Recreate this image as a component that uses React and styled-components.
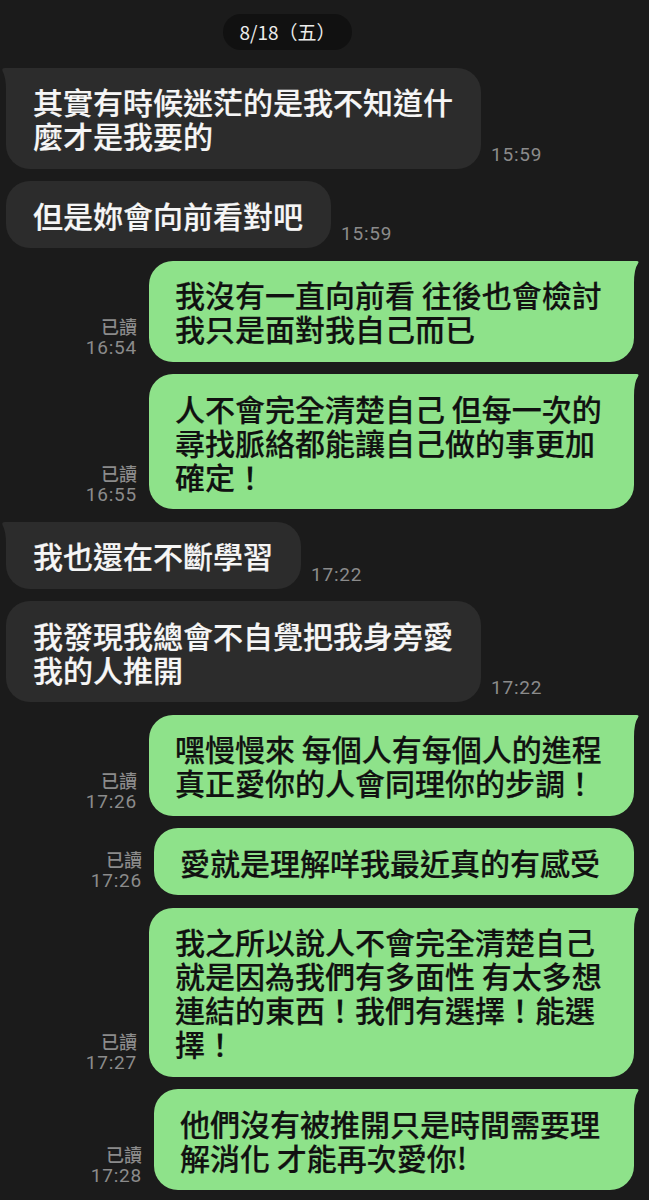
import React from 'react';
import styled, { createGlobalStyle } from 'styled-components';

const GlobalStyle = createGlobalStyle`
body {
    margin: 0;
    background: #1b1b1b;
}
`;

const Page = styled.div`
width: 649px;
min-height: 1200px;
background: #1b1b1b;
padding-top: 14px;
box-sizing: border-box;
display: flex;
flex-direction: column;
gap: 12.5px;
font-family: "Noto Sans CJK TC", "Noto Sans", sans-serif;
overflow: hidden;
`;

const DateRow = styled.div`
display: flex;
justify-content: center;
padding-right: 74px;
margin-bottom: 5px;
`;

const DatePill = styled.div`
height: 36px;
padding: 0 16px;
border-radius: 18px;
background: #111111;
color: #ececec;
font-size: 19px;
line-height: 36px;
font-weight: 400;
`;

const Row = styled.div`
display: flex;
align-items: flex-end;
justify-content: ${p => (p.mine ? 'flex-end' : 'flex-start')};
padding: ${p => (p.mine ? '0 15px 0 0' : '0 0 0 6px')};
gap: ${p => (p.mine ? '12px' : '10px')};
`;

const Bubble = styled.div`
position: relative;
box-sizing: border-box;
max-width: ${p => (p.mine ? '485px' : '478px')};
padding: ${p => (p.mine ? '16.5px 34px 16.5px 26px' : '16.5px 28px 16.5px 27px')};
border-radius: 24px;
background: ${p => (p.mine ? '#8ee28a' : '#2c2c2c')};
color: ${p => (p.mine ? '#111111' : '#f6f6f6')};
font-size: 30px;
line-height: 34px;
font-weight: 500;
-webkit-text-stroke: 0.2px currentColor;
white-space: nowrap;
`;

const Line = styled.div``;

const Tail = styled.svg`
position: absolute;
top: 0;
${p => (p.mine ? 'right: -5px;' : 'left: -5px;')}
width: 30px;
height: 30px;
`;

const Meta = styled.div`
display: flex;
flex-direction: column;
align-items: ${p => (p.mine ? 'flex-end' : 'flex-start')};
margin-bottom: 3px;
color: #8b8b8b;
font-size: 19px;
line-height: 22px;
`;

const ReadMark = styled.span`
font-family: "Noto Sans CJK TC", sans-serif;
font-size: 18px;
font-weight: 500;
`;

const Time = styled.span`
font-family: Roboto, "Liberation Sans", sans-serif;
letter-spacing: 0.8px;
`;

const messages = [
    { mine: false, tail: true, time: '15:59', lines: ['其實有時候迷茫的是我不知道什', '麼才是我要的'] },
    { mine: false, time: '15:59', lines: ['但是妳會向前看對吧'] },
    { mine: true, tail: true, time: '16:54', lines: ['我沒有一直向前看 往後也會檢討', '我只是面對我自己而已'] },
    { mine: true, tail: true, time: '16:55', lines: ['人不會完全清楚自己 但每一次的', '尋找脈絡都能讓自己做的事更加', '確定！'] },
    { mine: false, tail: true, time: '17:22', lines: ['我也還在不斷學習'] },
    { mine: false, time: '17:22', lines: ['我發現我總會不自覺把我身旁愛', '我的人推開'] },
    { mine: true, tail: true, time: '17:26', lines: ['嘿慢慢來 每個人有每個人的進程', '真正愛你的人會同理你的步調！'] },
    { mine: true, time: '17:26', lines: ['愛就是理解咩我最近真的有感受'] },
    { mine: true, tail: true, time: '17:27', lines: ['我之所以說人不會完全清楚自己', '就是因為我們有多面性 有太多想', '連結的東西！我們有選擇！能選', '擇！'] },
    { mine: true, tail: true, time: '17:28', lines: ['他們沒有被推開只是時間需要理', '解消化 才能再次愛你!'] },
];

const BubbleTail = ({ mine }) => (
    <Tail mine={mine} viewBox="0 0 30 30">
        {mine
            ? <path d="M0 0 H27.5 Q30.5 0 29 2.5 Q25 8 25 22 V30 H0 Z" fill="#8ee28a" />
            : <path d="M30 0 H4 Q0.5 0 1.5 3 Q5 9 5 22 V30 H30 Z" fill="#2c2c2c" />}
    </Tail>
);

const Message = ({ msg }) => {
    const bubble = (
        <Bubble mine={msg.mine}>
            {msg.tail && <BubbleTail mine={msg.mine} />}
            {msg.lines.map((l, i) => <Line key={i}>{l}</Line>)}
        </Bubble>
    );

    const meta = (
        <Meta mine={msg.mine}>
            {msg.mine && <ReadMark>已讀</ReadMark>}
            <Time>{msg.time}</Time>
        </Meta>
    );

    return (
        <Row mine={msg.mine}>
            {msg.mine ? meta : bubble}
            {msg.mine ? bubble : meta}
        </Row>
    );
};

const App = () => {
    return (
        <>
            <GlobalStyle />
            <Page>
                <DateRow>
                    <DatePill>8/18（五）</DatePill>
                </DateRow>
                {messages.map((m, i) => <Message key={i} msg={m} />)}
            </Page>
        </>
    );
};

export default App;
